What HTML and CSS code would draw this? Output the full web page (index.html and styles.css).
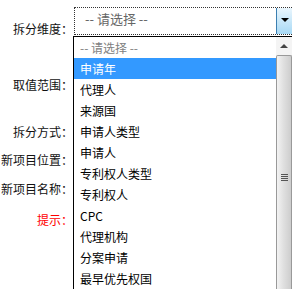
FILE: index.html
```html
<!DOCTYPE html>
<html lang="zh-CN">
<head>
  <meta charset="UTF-8">
  <title>拆分</title>
  <link rel="stylesheet" href="styles.css">
</head>
<body>
  <div class="split-form">
    <div class="row row-dim">
      <label class="label">拆分维度：</label>
      <div class="select-box">
        <span class="select-text">-- 请选择 --</span>
        <span class="select-btn"><span class="arrow-down"></span></span>
      </div>
    </div>
    <div class="row row-range">
      <label class="label">取值范围：</label>
    </div>
    <div class="row row-way">
      <label class="label">拆分方式：</label>
    </div>
    <div class="row row-pos">
      <label class="label">新项目位置：</label>
    </div>
    <div class="row row-name">
      <label class="label">新项目名称：</label>
    </div>
    <div class="row row-tip">
      <label class="label tip">提示：</label>
    </div>

    <!-- open dropdown of the select -->
    <div class="dropdown">
      <ul class="options">
        <li class="placeholder">-- 请选择 --</li>
        <li class="active">申请年</li>
        <li>代理人</li>
        <li>来源国</li>
        <li>申请人类型</li>
        <li>申请人</li>
        <li>专利权人类型</li>
        <li>专利权人</li>
        <li>CPC</li>
        <li>代理机构</li>
        <li>分案申请</li>
        <li>最早优先权国</li>
      </ul>
      <div class="scrollbar">
        <div class="scroll-up"><span class="arrow-up"></span></div>
        <div class="thumb"><span class="grip"></span></div>
      </div>
    </div>
  </div>
</body>
</html>
```

FILE: styles.css
```css
html, body {
  margin: 0;
  height: 100%;
  overflow: hidden;
  background: #fff;
}

body {
  font-family: "Noto Sans CJK SC", "Liberation Sans", sans-serif;
  font-size: 12px;
  color: #000;
}

.split-form {
  position: relative;
  height: 100%;
  overflow: hidden;
}

.row {
  display: flex;
  align-items: flex-start;
}

.label {
  width: 73px;
  text-align: right;
  line-height: 20px;
  white-space: nowrap;
  color: #111;
}

.tip {
  color: #ff0000;
}

.row-dim {
  padding-top: 7px;
}
.row-dim .label {
  margin-top: 12px;
}
.row-range { margin-top: 36px; }
.row-way { margin-top: 27px; }
.row-pos { margin-top: 8px; }
.row-name { margin-top: 9px; }
.row-tip { margin-top: 11px; }

/* select runs off the right edge, so no right border */
.select-box {
  display: flex;
  flex: 1;
  height: 26px;
  margin-left: 1px;
  border: 1px dotted #333;
  border-right: none;
}

.select-text {
  flex: 1;
  padding-left: 10px;
  line-height: 22px;
  font-size: 13px;
  color: #666;
}

.select-btn {
  width: 16px;
  border-left: 1px solid #3c7fb1;
  background: linear-gradient(#eaf6fd, #a7d9f5);
  display: flex;
  justify-content: center;
  padding-top: 10px;
  box-sizing: border-box;
}

.arrow-down {
  width: 0;
  height: 0;
  border-left: 4px solid transparent;
  border-right: 4px solid transparent;
  border-top: 4px solid #000;
}

.dropdown {
  position: absolute;
  left: 73px;
  top: 36px;
  right: 0;
  bottom: 0;
  border-left: 1px solid #000;
  border-top: 1px solid #000;
  display: flex;
  background: #fff;
  overflow: hidden;
}

.options {
  list-style: none;
  margin: 0;
  padding: 0;
  flex: 1;
}

.options li {
  height: 21px;
  line-height: 21px;
  padding-left: 6px;
  white-space: nowrap;
}

.options .placeholder {
  color: #808080;
}

.options .active {
  background: #3399ff;
  color: #fff;
}

.scrollbar {
  width: 16px;
  display: flex;
  flex-direction: column;
  background: #f4f4f4;
}

.scroll-up {
  height: 17px;
  display: flex;
  justify-content: center;
  align-items: center;
}

.arrow-up {
  width: 0;
  height: 0;
  border-left: 4px solid transparent;
  border-right: 4px solid transparent;
  border-bottom: 4px solid #444;
}

.thumb {
  flex: 1;
  margin-top: 1px;
  border: 1px solid #999;
  border-bottom: none;
  border-radius: 2px 2px 0 0;
  background: linear-gradient(90deg, #f3f3f3, #e0e0e0 45%, #cdcdcd);
  display: flex;
  justify-content: center;
  align-items: flex-start;
}

.grip {
  width: 7px;
  height: 7px;
  margin-top: 118px;
  background: repeating-linear-gradient(#555 0 1px, transparent 1px 2px);
}
```
